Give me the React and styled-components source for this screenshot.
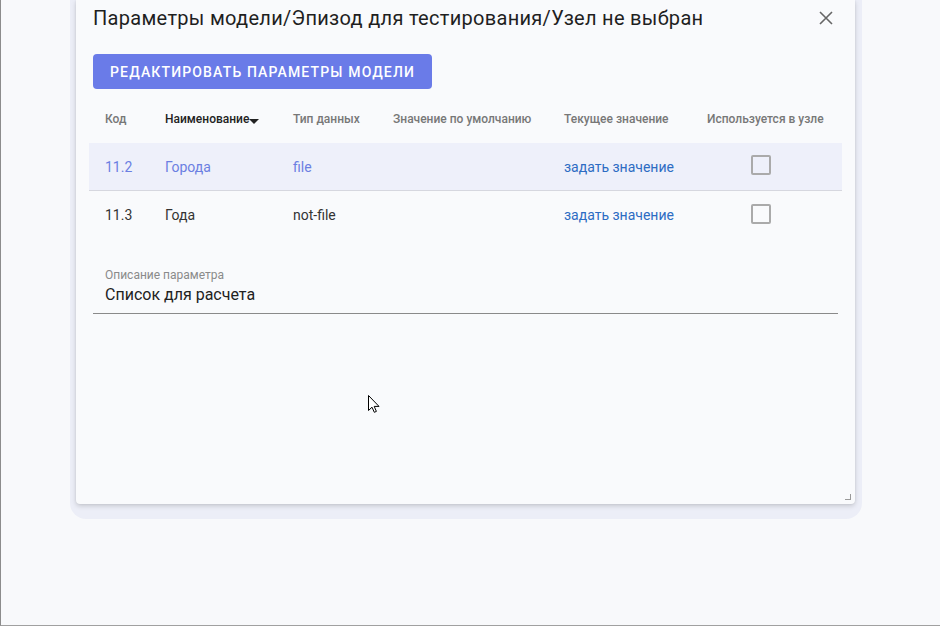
import React from 'react';
import styled, { createGlobalStyle } from 'styled-components';

const GlobalStyle = createGlobalStyle`
  html, body {
    margin: 0;
    padding: 0;
    background: #f8f9fb;
  }
  body {
    font-family: Roboto, 'Liberation Sans', sans-serif;
  }
`;

const columns = [
  { key: 'code', title: 'Код' },
  { key: 'name', title: 'Наименование', sorted: true },
  { key: 'type', title: 'Тип данных' },
  { key: 'def', title: 'Значение по умолчанию' },
  { key: 'cur', title: 'Текущее значение' },
  { key: 'used', title: 'Используется в узле' },
];

const rows = [
  { code: '11.2', name: 'Города', type: 'file', selected: true },
  { code: '11.3', name: 'Года', type: 'not-file' },
];

export default function App() {
  return (
    <>
      <GlobalStyle />
      <Page>
        <Backdrop>
          <Dialog>
            <Header>
              <Title>Параметры модели/Эпизод для тестирования/Узел не выбран</Title>
              <CloseButton aria-label='close'>
                <svg width='14' height='14' viewBox='0 0 14 14'>
                  <path d='M1 1L13 13M13 1L1 13' stroke='#666' strokeWidth='1.6' fill='none' />
                </svg>
              </CloseButton>
            </Header>
            <EditButton>Редактировать параметры модели</EditButton>
            <Table>
              <HeadRow>
                {columns.map((c) => (
                  <HeadCell key={c.key} $active={c.sorted}>
                    {c.title}
                    {c.sorted && <SortArrow />}
                  </HeadCell>
                ))}
              </HeadRow>
              {rows.map((r) => (
                <Row key={r.code} $selected={r.selected}>
                  <Cell>{r.code}</Cell>
                  <Cell>{r.name}</Cell>
                  <Cell>{r.type}</Cell>
                  <Cell />
                  <Cell>
                    <SetLink>задать значение</SetLink>
                  </Cell>
                  <CheckCell>
                    <Checkbox />
                  </CheckCell>
                </Row>
              ))}
            </Table>
            <Field>
              <FieldLabel>Описание параметра</FieldLabel>
              <FieldValue>Список для расчета</FieldValue>
            </Field>
            <ResizeHandle />
          </Dialog>
        </Backdrop>
        <Cursor width='12' height='18' viewBox='0 0 12 18'>
          <path
            d='M0.5 0.5V15.5L4 12.2L6.3 17.3L8.4 16.4L6.2 11.4H11L0.5 0.5Z'
            fill='#fff'
            stroke='#000'
            strokeWidth='1'
          />
        </Cursor>
      </Page>
    </>
  );
}

const Page = styled.div`
  position: relative;
  width: 940px;
  height: 626px;
  box-sizing: border-box;
  border-left: 1px solid #8c8c8c;
  border-bottom: 1px solid #a0a0a0;
  padding-left: 69px;
  overflow: hidden;
`;

const Backdrop = styled.div`
  width: 792px;
  box-sizing: border-box;
  padding: 0 7px 15px 6px;
  background: #eceef7;
  border-radius: 0 0 16px 16px;
`;

const Dialog = styled.div`
  position: relative;
  height: 504px;
  box-sizing: border-box;
  padding: 0 17px;
  background: #f9fafc;
  border-radius: 0 0 4px 4px;
  box-shadow: 0 2px 5px rgba(0, 0, 0, 0.16), 0 0 2px rgba(0, 0, 0, 0.08);
`;

const Header = styled.div`
  display: flex;
  align-items: center;
  justify-content: space-between;
  height: 36px;
`;

const Title = styled.h2`
  margin: 0;
  font-size: 20px;
  font-weight: 400;
  color: #1f1f1f;
  letter-spacing: 0.3px;
`;

const CloseButton = styled.button`
  display: flex;
  align-items: center;
  justify-content: center;
  width: 24px;
  height: 24px;
  padding: 0;
  border: 0;
  background: none;
  cursor: pointer;
`;

const EditButton = styled.button`
  display: block;
  height: 35px;
  margin-top: 18px;
  padding: 0 17px;
  border: 0;
  border-radius: 4px;
  background: #6a7be8;
  color: #fff;
  font-family: Roboto, 'Liberation Sans', sans-serif;
  font-size: 14px;
  font-weight: 500;
  letter-spacing: 1.15px;
  text-transform: uppercase;
  cursor: pointer;
`;

const Table = styled.div`
  margin: 6px -4px 0;
`;

const grid = `
  display: grid;
  grid-template-columns: 60px 128px 100px 171px 143px 1fr;
  align-items: center;
  box-sizing: border-box;
`;

const HeadRow = styled.div`
  ${grid}
  height: 48px;
`;

const HeadCell = styled.div`
  display: flex;
  align-items: center;
  padding-left: 16px;
  font-size: 12px;
  font-weight: 500;
  color: ${(p) => (p.$active ? '#222' : '#777')};
  white-space: nowrap;
`;

const SortArrow = styled.span`
  width: 0;
  height: 0;
  margin-top: 5px;
  border-left: 5px solid transparent;
  border-right: 5px solid transparent;
  border-top: 5px solid #222;
`;

const Row = styled.div`
  ${grid}
  height: 48px;
  background: ${(p) => (p.$selected ? '#eef0fa' : 'transparent')};
  border-bottom: ${(p) => (p.$selected ? '1px solid #d6d7df' : '0')};
  color: ${(p) => (p.$selected ? '#6b7fe2' : '#333')};
  font-size: 14px;
`;

const Cell = styled.div`
  padding-left: 16px;
  white-space: nowrap;
`;

const SetLink = styled.span`
  color: #2d6cc3;
  cursor: pointer;
`;

const CheckCell = styled.div`
  display: flex;
  justify-content: center;
  padding: 0 16px 3px 4px;
`;

const Checkbox = styled.span`
  width: 16px;
  height: 16px;
  border: 2px solid #aaa;
  border-radius: 2px;
`;

const Field = styled.div`
  margin-top: 29px;
  padding: 0 12px 9px;
  border-bottom: 1px solid #8a8a8a;
`;

const FieldLabel = styled.div`
  font-size: 12px;
  line-height: 14px;
  color: #8a8a8a;
`;

const FieldValue = styled.div`
  margin-top: 3px;
  font-size: 16px;
  line-height: 19px;
  color: #222;
`;

const ResizeHandle = styled.span`
  position: absolute;
  right: 4px;
  bottom: 4px;
  width: 5px;
  height: 5px;
  border-right: 1px solid #999;
  border-bottom: 1px solid #999;
`;

const Cursor = styled.svg`
  position: absolute;
  left: 367px;
  top: 395px;
`;
